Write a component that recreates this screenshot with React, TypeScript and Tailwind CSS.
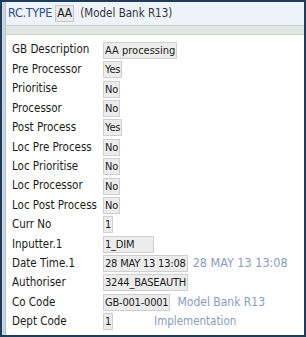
const rows: { label: string; value: string; box?: string; extra?: string; extraClass?: string }[] = [
  { label: "Pre Processor", value: "Yes" },
  { label: "Prioritise", value: "No" },
  { label: "Processor", value: "No" },
  { label: "Post Process", value: "Yes" },
  { label: "Loc Pre Process", value: "No" },
  { label: "Loc Prioritise", value: "No" },
  { label: "Loc Processor", value: "No" },
  { label: "Loc Post Process", value: "No" },
  { label: "Curr No", value: "1" },
  { label: "Inputter.1", value: "1_DIM", box: "w-[51px]" },
  { label: "Date Time.1", value: "28 MAY 13 13:08", extra: "28 MAY 13 13:08", extraClass: "ml-[5px] text-[12.5px]" },
  { label: "Authoriser", value: "3244_BASEAUTH" },
  { label: "Co Code", value: "GB-001-0001", extra: "Model Bank R13", extraClass: "ml-[7px] text-[12px]" },
  { label: "Dept Code", value: "1", extra: "Implementation", extraClass: "ml-[41px] text-[11.5px]" },
];

export default function App() {
  return (
    <div
      className="h-[337px] w-[306px] overflow-hidden border-2 border-[#1e3d5c] bg-[#c9d5e1] pl-[3px] text-[#1a1a1a]"
      style={{ fontFamily: "Tahoma, 'DejaVu Sans Condensed', 'Liberation Sans', sans-serif" }}
    >
      <div className="flex h-full flex-col border-l border-[#b4c1cf] bg-white">
        <div className="flex h-[23px] items-center gap-[3px] bg-[#eef2fb] pl-[2px]">
          <span className="text-[12.5px] tracking-[-0.3px] text-[#2d4f86]">RC.TYPE</span>
          <span className="border border-[#c8c8c8] bg-[#e9e9e9] px-[1px] text-[12px] leading-[15px]">AA</span>
          <span className="ml-[3px] text-[11.5px] text-[#333]">(Model Bank R13)</span>
        </div>
        <div className="h-[10px] border-y border-[#c9d2cc] bg-[#dfe7e2]" />
        <div className="flex flex-col pl-[6px] pt-[5px] text-[11.5px]">
          <div className="flex h-[20px] items-center">
            <span className="w-[91px] shrink-0 whitespace-nowrap">GB Description</span>
            <span className="whitespace-nowrap border border-[#cfcfcf] bg-[#ececec] px-[1px] text-[11px] leading-[15px]">AA processing</span>
          </div>
          {rows.map((r) => (
            <div key={r.label} className="flex h-[19.4px] items-center whitespace-nowrap">
              <span className="w-[91px] shrink-0">{r.label}</span>
              <span
                className={`${r.box ?? ""} shrink-0 border border-[#cfcfcf] bg-[#ececec] px-[1px] text-[11px] leading-[15px] tracking-[-0.2px]`}
              >
                {r.value}
              </span>
              {r.extra && (
                <span className={`${r.extraClass} text-[#8a9bbd]`}>{r.extra}</span>
              )}
            </div>
          ))}
        </div>
      </div>
    </div>
  );
}
